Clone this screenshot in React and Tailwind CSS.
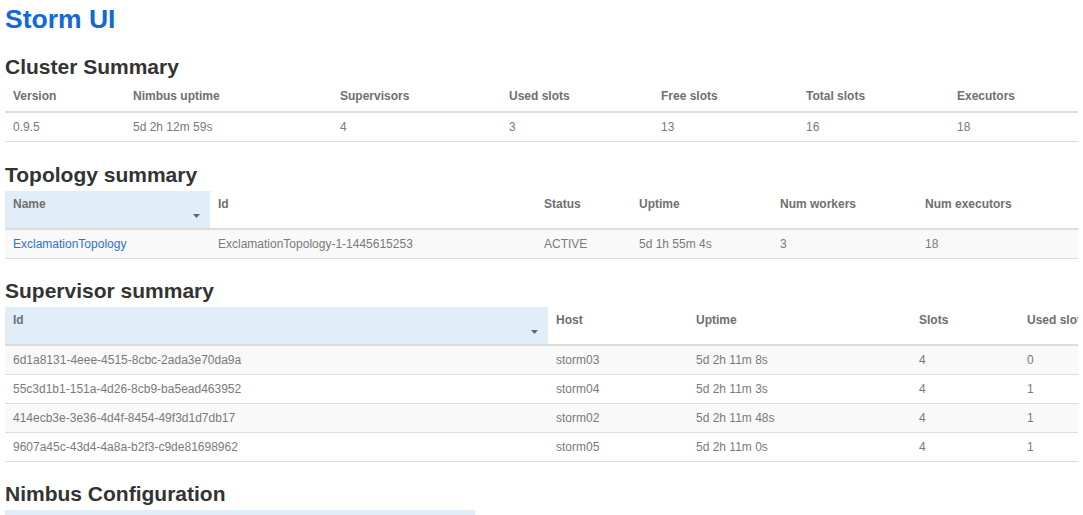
import React from 'react';

const cluster = {
    cols: [
        ['Version', 120],
        ['Nimbus uptime', 207],
        ['Supervisors', 169],
        ['Used slots', 152],
        ['Free slots', 145],
        ['Total slots', 151],
        ['Executors', 129],
    ],
    rows: [['0.9.5', '5d 2h 12m 59s', '4', '3', '13', '16', '18']],
};

const topology = {
    cols: [
        ['Name', 205],
        ['Id', 326],
        ['Status', 95],
        ['Uptime', 141],
        ['Num workers', 145],
        ['Num executors', 161],
    ],
    rows: [['ExclamationTopology', 'ExclamationTopology-1-1445615253', 'ACTIVE', '5d 1h 55m 4s', '3', '18']],
};

const supervisors = {
    cols: [
        ['Id', 543],
        ['Host', 140],
        ['Uptime', 223],
        ['Slots', 108],
        ['Used slots', 140],
    ],
    rows: [
        ['6d1a8131-4eee-4515-8cbc-2ada3e70da9a', 'storm03', '5d 2h 11m 8s', '4', '0'],
        ['55c3d1b1-151a-4d26-8cb9-ba5ead463952', 'storm04', '5d 2h 11m 3s', '4', '1'],
        ['414ecb3e-3e36-4d4f-8454-49f3d1d7db17', 'storm02', '5d 2h 11m 48s', '4', '1'],
        ['9607a45c-43d4-4a8a-b2f3-c9de81698962', 'storm05', '5d 2h 11m 0s', '4', '1'],
    ],
};

const nimbusConf = {
    cols: [
        ['Key', 470],
        ['Value', 603],
    ],
    rows: [
        ['dev.zookeeper.path', '/tmp/dev-storm-zookeeper'],
        ['drpc.childopts', '-Xmx768m'],
        ['drpc.invocations.port', '3773'],
    ],
};

function Caret() {
    return (
        <svg className="absolute right-[10px] bottom-[10px]" width="7" height="4" viewBox="0 0 7 4">
            <path d="M0 0 L7 0 L3.5 4 Z" fill="#666" />
        </svg>
    );
}

function DataTable({ data, sortable, striped = true, link }) {
    const total = data.cols.reduce((s, c) => s + c[1], 0);
    return (
        <div className="w-[1073px] overflow-hidden">
            <table className="table-fixed border-collapse text-[12px]" style={{ width: total }}>
                <colgroup>
                    {data.cols.map(([name, w]) => (
                        <col key={name} style={{ width: w }} />
                    ))}
                </colgroup>
                <thead>
                    <tr>
                        {data.cols.map(([name], i) => (
                            <th
                                key={name}
                                className={`relative text-left align-top font-bold text-[#6f6f6f] leading-[14px] px-2 pt-[6px] border-b-2 border-[#ddd] whitespace-nowrap ${sortable ? 'h-[38px]' : 'h-[29px]'} ${sortable && i === 0 ? 'bg-[#e1eef7]' : ''}`}
                            >
                                {name}
                                {sortable && i === 0 && <Caret />}
                            </th>
                        ))}
                    </tr>
                </thead>
                <tbody>
                    {data.rows.map((row, r) => (
                        <tr key={r} className={striped && r % 2 === 0 ? 'bg-[#f9f9f9]' : 'bg-white'}>
                            {row.map((cell, i) => (
                                <td
                                    key={i}
                                    className="h-[29px] px-2 leading-[28px] text-[#7a7a7a] border-b border-[#ddd] whitespace-nowrap"
                                >
                                    {link && i === 0 ? (
                                        <a href="#" className="text-[#2e6fd9]">{cell}</a>
                                    ) : (
                                        cell
                                    )}
                                </td>
                            ))}
                        </tr>
                    ))}
                </tbody>
            </table>
        </div>
    );
}

function Heading({ children, className = '' }) {
    return (
        <h2 className={`h-[24px] leading-[24px] text-[21px] font-bold text-[#333] mb-[4px] ${className}`}>
            {children}
        </h2>
    );
}

export default function App() {
    return (
        <div
            className="min-h-screen bg-white px-[5px] overflow-hidden"
            style={{ fontFamily: '"Liberation Sans", Arial, sans-serif' }}
        >
            <h1 className="pt-[4px] h-[34px] leading-[30px] text-[26.5px] font-bold text-[#1168d6]">Storm UI</h1>

            <Heading className="mt-[21px]">Cluster Summary</Heading>
            <DataTable data={cluster} striped={false} />

            <Heading className="mt-[21px]">Topology summary</Heading>
            <DataTable data={topology} sortable link />

            <Heading className="mt-[20px]">Supervisor summary</Heading>
            <DataTable data={supervisors} sortable />

            <Heading className="mt-[20px]">Nimbus Configuration</Heading>
            <DataTable data={nimbusConf} sortable />
        </div>
    );
}
